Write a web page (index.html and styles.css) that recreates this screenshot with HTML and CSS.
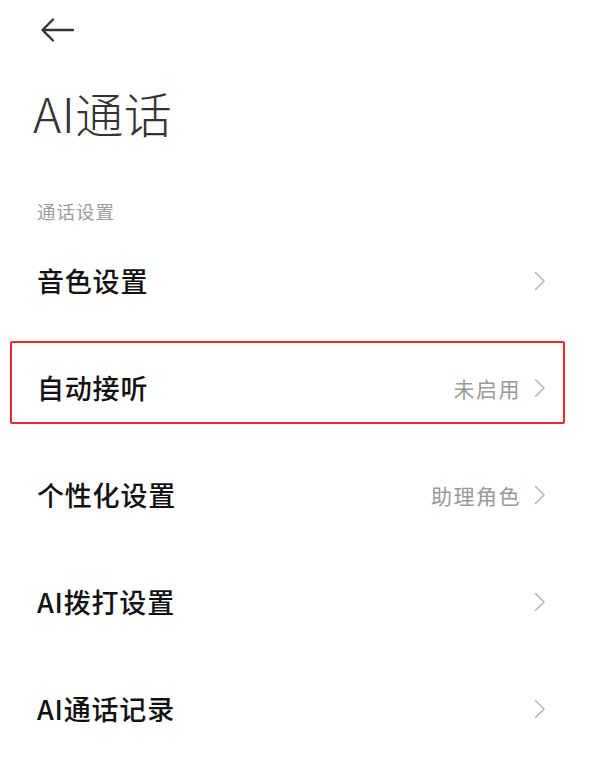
FILE: index.html
```html
<!DOCTYPE html>
<html lang="zh-CN">
<head>
<meta charset="utf-8">
<title>AI通话</title>
<link rel="stylesheet" href="styles.css">
</head>
<body>
<div class="page">
  <div class="topbar">
    <svg class="back" width="34" height="26" viewBox="0 0 34 26" aria-hidden="true">
      <path d="M33 13 H3 M13 2.5 L2.5 13 L13 23.5" fill="none" stroke="#333" stroke-width="2.4" stroke-linecap="round" stroke-linejoin="round"/>
    </svg>
  </div>
  <h1 class="title">AI通话</h1>
  <div class="section">通话设置</div>
  <ul class="list">
    <li class="row"><span class="label">音色设置</span><span class="right"><svg class="chev" width="12" height="20" viewBox="0 0 12 20"><path d="M1.5 1.5 L10 10 L1.5 18.5" fill="none" stroke="#b8b8b8" stroke-width="1.6" stroke-linecap="round" stroke-linejoin="round"/></svg></span></li>
    <li class="row"><span class="label">自动接听</span><span class="right"><span class="value">未启用</span><svg class="chev" width="12" height="20" viewBox="0 0 12 20"><path d="M1.5 1.5 L10 10 L1.5 18.5" fill="none" stroke="#b8b8b8" stroke-width="1.6" stroke-linecap="round" stroke-linejoin="round"/></svg></span></li>
    <li class="row"><span class="label">个性化设置</span><span class="right"><span class="value">助理角色</span><svg class="chev" width="12" height="20" viewBox="0 0 12 20"><path d="M1.5 1.5 L10 10 L1.5 18.5" fill="none" stroke="#b8b8b8" stroke-width="1.6" stroke-linecap="round" stroke-linejoin="round"/></svg></span></li>
    <li class="row"><span class="label">AI拨打设置</span><span class="right"><svg class="chev" width="12" height="20" viewBox="0 0 12 20"><path d="M1.5 1.5 L10 10 L1.5 18.5" fill="none" stroke="#b8b8b8" stroke-width="1.6" stroke-linecap="round" stroke-linejoin="round"/></svg></span></li>
    <li class="row"><span class="label">AI通话记录</span><span class="right"><svg class="chev" width="12" height="20" viewBox="0 0 12 20"><path d="M1.5 1.5 L10 10 L1.5 18.5" fill="none" stroke="#b8b8b8" stroke-width="1.6" stroke-linecap="round" stroke-linejoin="round"/></svg></span></li>
  </ul>
  <div class="highlight"></div>
</div>
</body>
</html>
```

FILE: styles.css
```css
html, body {
  margin: 0;
  padding: 0;
  background: #ffffff;
}
body {
  font-family: "Noto Sans CJK SC", "Noto Sans", sans-serif;
  color: #111;
}
.page {
  position: relative;
  width: 590px;
  height: 770px;
  overflow: hidden;
}
.topbar {
  height: 60px;
  padding-left: 40px;
  display: flex;
  align-items: flex-start;
}
.back {
  margin-top: 17px;
  display: block;
}
.title {
  margin: 0;
  height: 104px;
  line-height: 104px;
  padding-left: 33px;
  font-size: 48px;
  font-weight: 300;
  color: #333;
  letter-spacing: 0.5px;
}
.section {
  margin-top: 35px;
  line-height: 24px;
  height: 24px;
  padding-left: 37px;
  font-size: 18.5px;
  letter-spacing: 1px;
  color: #9a9ca2;
}
.list {
  list-style: none;
  margin: 4px 0 0 0;
  padding: 0;
}
.row {
  height: 107px;
  display: flex;
  align-items: center;
  justify-content: space-between;
  padding: 0 44px 0 37px;
}
.label {
  font-size: 27px;
  font-weight: 500;
  letter-spacing: 0.8px;
  color: #111;
}
.right {
  display: flex;
  align-items: center;
  gap: 13px;
}
.value {
  font-size: 21px;
  letter-spacing: 1.5px;
  color: #999;
}
.chev {
  display: block;
}
.highlight {
  position: absolute;
  left: 10px;
  top: 341px;
  width: 551px;
  height: 79px;
  border: 2px solid #f22a2a;
  border-radius: 2px;
}
```
